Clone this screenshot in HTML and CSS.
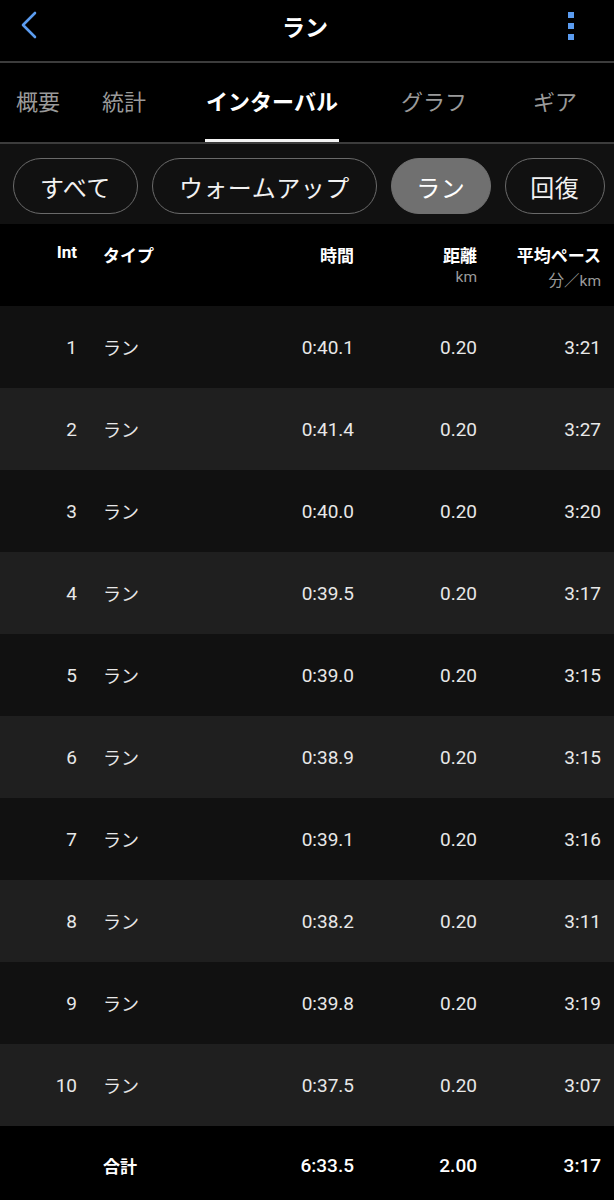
FILE: index.html
```html
<!DOCTYPE html>
<html lang="ja">
<head>
  <meta charset="UTF-8">
  <meta name="viewport" content="width=device-width, initial-scale=1.0">
  <title>ラン</title>
  <link rel="stylesheet" href="styles.css">
</head>
<body>
  <header class="topbar">
    <svg class="back" width="18" height="28" viewBox="0 0 18 28">
      <path d="M15 2 L3 14 L15 26" fill="none" stroke="#5b9cf0" stroke-width="2.6" stroke-linecap="round" stroke-linejoin="round"/>
    </svg>
    <h1 class="title">ラン</h1>
    <div class="kebab"><i></i><i></i><i></i></div>
  </header>

  <nav class="tabs">
    <div class="tab"><span>概要</span></div>
    <div class="tab"><span>統計</span></div>
    <div class="tab active"><span>インターバル</span></div>
    <div class="tab"><span>グラフ</span></div>
    <div class="tab"><span>ギア</span></div>
  </nav>

  <div class="chips">
    <div class="chip">すべて</div>
    <div class="chip">ウォームアップ</div>
    <div class="chip short selected">ラン</div>
    <div class="chip short">回復</div>
  </div>

  <div class="laps">
    <div class="row head">
      <div class="c-int">Int</div>
      <div class="c-type">タイプ</div>
      <div class="c-num">時間</div>
      <div class="c-num">距離<small>km</small></div>
      <div class="c-num">平均ペース<small>分／km</small></div>
    </div>

    <div class="row"><div class="c-int">1</div><div class="c-type">ラン</div><div class="c-num">0:40.1</div><div class="c-num">0.20</div><div class="c-num">3:21</div></div>
    <div class="row"><div class="c-int">2</div><div class="c-type">ラン</div><div class="c-num">0:41.4</div><div class="c-num">0.20</div><div class="c-num">3:27</div></div>
    <div class="row"><div class="c-int">3</div><div class="c-type">ラン</div><div class="c-num">0:40.0</div><div class="c-num">0.20</div><div class="c-num">3:20</div></div>
    <div class="row"><div class="c-int">4</div><div class="c-type">ラン</div><div class="c-num">0:39.5</div><div class="c-num">0.20</div><div class="c-num">3:17</div></div>
    <div class="row"><div class="c-int">5</div><div class="c-type">ラン</div><div class="c-num">0:39.0</div><div class="c-num">0.20</div><div class="c-num">3:15</div></div>
    <div class="row"><div class="c-int">6</div><div class="c-type">ラン</div><div class="c-num">0:38.9</div><div class="c-num">0.20</div><div class="c-num">3:15</div></div>
    <div class="row"><div class="c-int">7</div><div class="c-type">ラン</div><div class="c-num">0:39.1</div><div class="c-num">0.20</div><div class="c-num">3:16</div></div>
    <div class="row"><div class="c-int">8</div><div class="c-type">ラン</div><div class="c-num">0:38.2</div><div class="c-num">0.20</div><div class="c-num">3:11</div></div>
    <div class="row"><div class="c-int">9</div><div class="c-type">ラン</div><div class="c-num">0:39.8</div><div class="c-num">0.20</div><div class="c-num">3:19</div></div>
    <div class="row"><div class="c-int">10</div><div class="c-type">ラン</div><div class="c-num">0:37.5</div><div class="c-num">0.20</div><div class="c-num">3:07</div></div>

    <div class="row total">
      <div class="c-int"></div>
      <div class="c-type">合計</div>
      <div class="c-num">6:33.5</div>
      <div class="c-num">2.00</div>
      <div class="c-num">3:17</div>
    </div>
  </div>
</body>
</html>
```

FILE: styles.css
```css
* { box-sizing: border-box; }

body {
  margin: 0;
  background: #000;
  color: #fff;
  font-family: Roboto, "Noto Sans CJK JP", sans-serif;
}

/* Top bar */
.topbar {
  height: 63px;
  display: flex;
  align-items: center;
  justify-content: space-between;
  padding: 0 40px 0 20px;
  border-bottom: 2px solid #3c3c3c;
}
.topbar .back { display: block; margin-top: -12px; }
.topbar .title {
  margin: 0 0 10px 4px;
  font-size: 23px;
  font-weight: 700;
}
.kebab {
  display: flex;
  flex-direction: column;
  gap: 5px;
  margin-top: -10px;
}
.kebab i {
  display: block;
  width: 6px;
  height: 6px;
  background: #5b9cf0;
}

/* Tabs */
.tabs {
  display: grid;
  grid-template-columns: 76px 96px 200px 124px 118px;
  height: 81px;
  border-bottom: 2px solid #3c3c3c;
}
.tab {
  display: flex;
  justify-content: center;
  align-items: flex-end;
}
.tab span {
  display: block;
  font-size: 22px;
  color: #9a9a9a;
  line-height: 30px;
  padding-bottom: 21px;
  border-bottom: 3px solid transparent;
}
.tab.active span {
  color: #fff;
  font-weight: 700;
  border-bottom-color: #f2f2f2;
  padding: 0 1px 21px;
}

/* Filter chips */
.chips {
  background: #111;
  display: flex;
  gap: 14px;
  padding: 14px 0 10px 13px;
  overflow: hidden;
}
.chip {
  flex-shrink: 0;
  white-space: nowrap;
  height: 56px;
  display: flex;
  align-items: center;
  padding: 0 26px;
  border: 1.5px solid #6a6a6a;
  border-radius: 28px;
  font-size: 24px;
  letter-spacing: 0.5px;
  color: #f2f2f2;
}
.chip.short { padding: 0 24.5px; }
.chip.selected {
  background: #707070;
  border-color: #707070;
  color: #fff;
}

/* Lap table */
.row {
  display: grid;
  grid-template-columns: 77px 163px 114px 123px 124px;
  height: 82px;
  align-items: center;
  padding-right: 13px;
  font-size: 19px;
  color: #e8e8e8;
}
.row:nth-child(even) { background: #111; }
.row:nth-child(odd) { background: #1f1f1f; }

.c-int { text-align: right; }
.c-type { padding-left: 26px; font-size: 18px; }
.c-num { text-align: right; }

.row.head {
  background: #000;
  align-items: start;
  padding-top: 18px;
  font-size: 17px;
  font-weight: 700;
  color: #fff;
}
.row.head .c-type { font-size: 17px; }
.row.head small {
  display: block;
  font-size: 15.5px;
  font-weight: 400;
  color: #9a9a9a;
  margin-top: 1px;
}

.row.total {
  background: #000;
  height: 74px;
  padding-top: 4px;
  color: #fff;
  font-weight: 500;
}
.row.total .c-type { font-weight: 700; font-size: 17px; }
```
